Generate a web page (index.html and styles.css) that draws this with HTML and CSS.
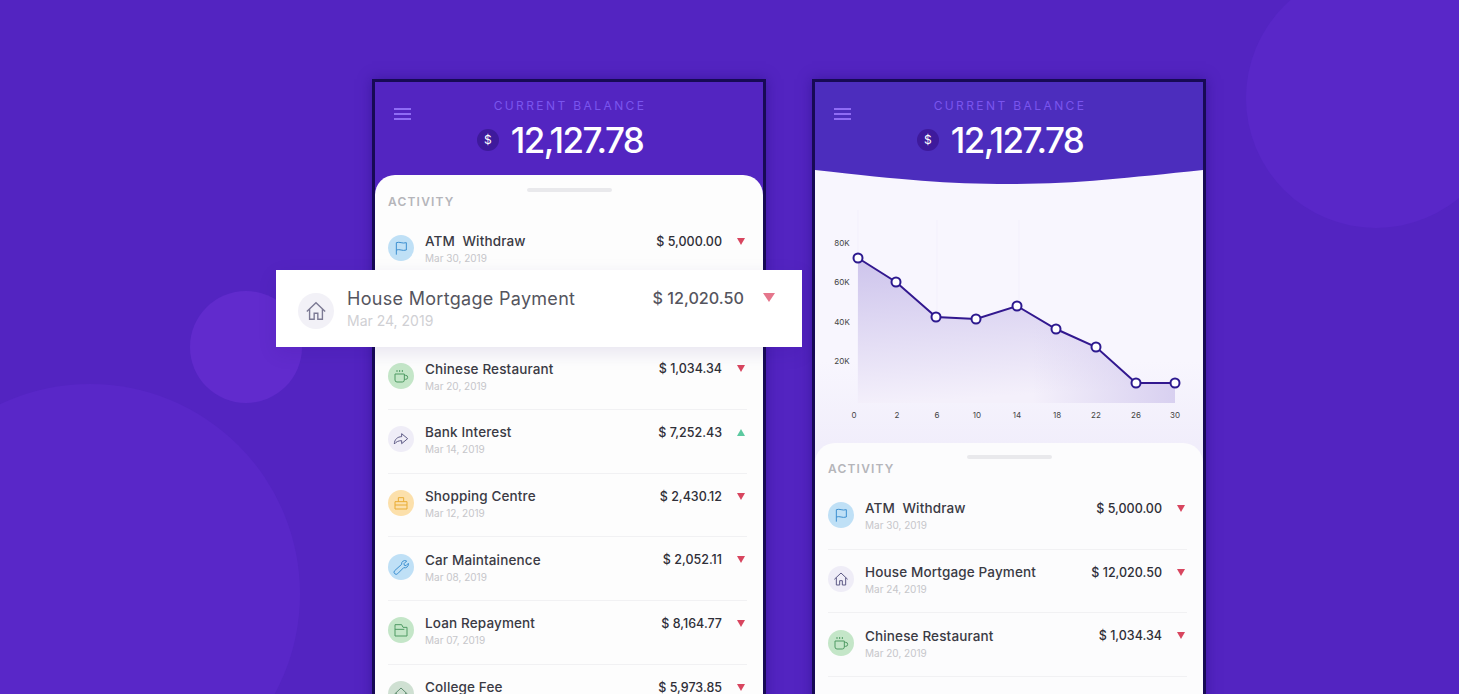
FILE: index.html
```html
<!DOCTYPE html>
<html lang="en">
<head>
<meta charset="UTF-8">
<meta name="viewport" content="width=device-width, initial-scale=1.0">
<link rel="stylesheet" href="styles.css">
<title>Current Balance</title>
</head>
<body>
  <svg class="defs" width="0" height="0">
    <symbol id="i-flag" viewBox="0 0 24 24"><path d="M5 22V4c5-2 9 2 15 0v11c-6 2-10-2-15 0"/></symbol>
    <symbol id="i-home" viewBox="0 0 24 24"><path d="M2 12.500 12 3l10 9.500M5 10v11h5v-6.500h4V21h5V10"/></symbol>
    <symbol id="i-cup" viewBox="0 0 24 24"><path d="M3 9h14v9a3 3 0 0 1-3 3H6a3 3 0 0 1-3-3zM17 11h2a2.500 2.500 0 0 1 0 6h-2M6 3v3M10 3v3M14 3v3"/></symbol>
    <symbol id="i-share" viewBox="0 0 24 24"><path d="M13 4l9 7.500-9 7.500v-4.500c-5 0-8 1.500-11 5 0-7 5-11 11-11z"/></symbol>
    <symbol id="i-bag" viewBox="0 0 24 24"><path d="M3 10h18v11H3zM8 10V4h8v6M3 15h18"/></symbol>
    <symbol id="i-wrench" viewBox="0 0 24 24"><path d="M14.500 3.500a5.500 5.500 0 0 1 6-.5l-4 4 .5 2.500 2.500.5 3.500-3.500a5.500 5.500 0 0 1-7 6.500L7 22a2.500 2.500 0 0 1-4.500-4.500L13 8a5 5 0 0 1 1.500-4.500z"/></symbol>
    <symbol id="i-wallet" viewBox="0 0 24 24"><path d="M3 8V4h10l2 4h6v13H3zM3 11h14"/></symbol>
  </svg>

  <div class="page">
    <div class="blob blob-top"></div>
    <div class="blob blob-small"></div>
    <div class="blob blob-big"></div>

    <div class="phones">
      <section class="phone">
        <header class="head">
          <div class="menu"><span></span><span></span><span></span></div>
          <div class="balance">
            <div class="balance-label">CURRENT BALANCE</div>
            <div class="balance-value"><span class="coin">$</span><span>12,127.78</span></div>
          </div>
        </header>
        <div class="card card-first">
          <div class="handle"></div>
          <h2 class="card-title">ACTIVITY</h2>
          <ul class="rows">
            <li class="row">
              <span class="ico ico-blue"><svg><use href="#i-flag"/></svg></span>
              <div class="info"><div class="name">ATM &nbsp;Withdraw</div><div class="date">Mar 30, 2019</div></div>
              <div class="amount">$ 5,000.00</div><span class="down"></span>
            </li>
            <li class="row"></li>
            <li class="row">
              <span class="ico ico-green"><svg><use href="#i-cup"/></svg></span>
              <div class="info"><div class="name">Chinese Restaurant</div><div class="date">Mar 20, 2019</div></div>
              <div class="amount">$ 1,034.34</div><span class="down"></span>
            </li>
            <li class="row">
              <span class="ico ico-grey"><svg><use href="#i-share"/></svg></span>
              <div class="info"><div class="name">Bank Interest</div><div class="date">Mar 14, 2019</div></div>
              <div class="amount">$ 7,252.43</div><span class="up"></span>
            </li>
            <li class="row">
              <span class="ico ico-yellow"><svg><use href="#i-bag"/></svg></span>
              <div class="info"><div class="name">Shopping Centre</div><div class="date">Mar 12, 2019</div></div>
              <div class="amount">$ 2,430.12</div><span class="down"></span>
            </li>
            <li class="row">
              <span class="ico ico-blue"><svg><use href="#i-wrench"/></svg></span>
              <div class="info"><div class="name">Car Maintainence</div><div class="date">Mar 08, 2019</div></div>
              <div class="amount">$ 2,052.11</div><span class="down"></span>
            </li>
            <li class="row">
              <span class="ico ico-green"><svg><use href="#i-wallet"/></svg></span>
              <div class="info"><div class="name">Loan Repayment</div><div class="date">Mar 07, 2019</div></div>
              <div class="amount">$ 8,164.77</div><span class="down"></span>
            </li>
            <li class="row">
              <span class="ico ico-sage"><svg><use href="#i-home"/></svg></span>
              <div class="info"><div class="name">College Fee</div><div class="date">&nbsp;</div></div>
              <div class="amount">$ 5,973.85</div><span class="down"></span>
            </li>
          </ul>
        </div>
      </section>

      <section class="phone phone-chart">
        <header class="head">
          <div class="menu"><span></span><span></span><span></span></div>
          <div class="balance">
            <div class="balance-label">CURRENT BALANCE</div>
            <div class="balance-value"><span class="coin">$</span><span>12,127.78</span></div>
          </div>
        </header>
        <svg class="chart" viewBox="0 0 388 273" width="388" height="273">
          <defs>
            <linearGradient id="fillBack" x1="0" y1="0" x2="0" y2="1">
              <stop offset="0.7" stop-color="#f8f6fe"/>
              <stop offset="1" stop-color="#f1eefb"/>
            </linearGradient>
            <linearGradient id="fillDown" x1="0" y1="0" x2="0.15" y2="1">
              <stop offset="0" stop-color="#cdc4ec"/>
              <stop offset="1" stop-color="#f4f0fb"/>
            </linearGradient>
            <linearGradient id="fillSide" x1="0" y1="0" x2="1" y2="0">
              <stop offset="0.55" stop-color="#d8d0f0" stop-opacity="0"/>
              <stop offset="1" stop-color="#d8d0f0"/>
            </linearGradient>
          </defs>
          <rect width="388" height="273" fill="url(#fillBack)"/>
          <path d="M0 0C90 10 130 14 195 14S310 8 388 0V-2H0Z" fill="#4c2dbd"/>
          <g class="grid-lines">
            <path d="M43 40V233M122 50V233M204 50V233"/>
          </g>
          <path d="M43 88 81 112 121 147 161 149 202 136 241 159 281 177 321 213 360 213V233H43Z" fill="url(#fillDown)"/>
          <path d="M43 88 81 112 121 147 161 149 202 136 241 159 281 177 321 213 360 213V233H43Z" fill="url(#fillSide)"/>
          <polyline class="line" points="43,88 81,112 121,147 161,149 202,136 241,159 281,177 321,213 360,213"/>
          <g class="dots">
            <circle cx="43" cy="88" r="4.500"/><circle cx="81" cy="112" r="4.500"/><circle cx="121" cy="147" r="4.500"/>
            <circle cx="161" cy="149" r="4.500"/><circle cx="202" cy="136" r="4.500"/><circle cx="241" cy="159" r="4.500"/>
            <circle cx="281" cy="177" r="4.500"/><circle cx="321" cy="213" r="4.500"/><circle cx="360" cy="213" r="4.500"/>
          </g>
          <g class="axis">
            <text x="27" y="76">80K</text><text x="27" y="115">60K</text><text x="27" y="155">40K</text><text x="27" y="194">20K</text>
            <text x="39" y="248">0</text><text x="82" y="248">2</text><text x="122" y="248">6</text>
            <text x="162" y="248">10</text><text x="202" y="248">14</text><text x="242" y="248">18</text>
            <text x="281" y="248">22</text><text x="321" y="248">26</text><text x="360" y="248">30</text>
          </g>
        </svg>
        <div class="card">
          <div class="handle"></div>
          <h2 class="card-title">ACTIVITY</h2>
          <ul class="rows">
            <li class="row">
              <span class="ico ico-blue"><svg><use href="#i-flag"/></svg></span>
              <div class="info"><div class="name">ATM &nbsp;Withdraw</div><div class="date">Mar 30, 2019</div></div>
              <div class="amount">$ 5,000.00</div><span class="down"></span>
            </li>
            <li class="row">
              <span class="ico ico-grey"><svg><use href="#i-home"/></svg></span>
              <div class="info"><div class="name">House Mortgage Payment</div><div class="date">Mar 24, 2019</div></div>
              <div class="amount">$ 12,020.50</div><span class="down"></span>
            </li>
            <li class="row">
              <span class="ico ico-green"><svg><use href="#i-cup"/></svg></span>
              <div class="info"><div class="name">Chinese Restaurant</div><div class="date">Mar 20, 2019</div></div>
              <div class="amount">$ 1,034.34</div><span class="down"></span>
            </li>
          </ul>
        </div>
      </section>
    </div>

    <div class="popout">
      <span class="ico ico-grey"><svg><use href="#i-home"/></svg></span>
      <div><div class="name">House Mortgage Payment</div><div class="date">Mar 24, 2019</div></div>
      <div class="amount">$ 12,020.50</div><span class="down"></span>
    </div>
  </div>
</body>
</html>
```

FILE: styles.css
```css
* {
  box-sizing: border-box;
}

body {
  margin: 0;
  font-family: Inter, "Noto Sans", sans-serif;
  background-color: #5324c1;
}

.defs {
  position: absolute;
}

.page {
  position: relative;
  height: 694px;
  overflow: hidden;
  background-color: #5324c1;
}

.blob {
  position: absolute;
  border-radius: 50%;
  background-color: #5927c8;
}

.blob-top {
  left: 1246px;
  top: -32px;
  width: 260px;
  height: 260px;
}

.blob-small {
  left: 190px;
  top: 291px;
  width: 112px;
  height: 112px;
  background-color: #612bcd;
}

.blob-big {
  left: -120px;
  top: 384px;
  width: 420px;
  height: 420px;
}

.phones {
  position: relative;
  display: flex;
  gap: 46px;
  padding: 79px 0 0 372px;
}

.phone {
  width: 394px;
  height: 700px;
  border: 3px solid #170a55;
  border-bottom: 0;
  background-color: #5325c1;
  box-shadow: 0 0 12px rgba(40, 14, 130, 0.55);
  overflow: hidden;
}

.phone-chart {
  background-color: #f1eefb;
}

.head {
  display: grid;
  grid-template-columns: 1fr auto 1fr;
  height: 93px;
  padding: 17px 19px 0;
}

.phone-chart .head {
  height: 88px;
  background-color: #4c2dbd;
}

.menu {
  display: flex;
  flex-direction: column;
  gap: 3px;
  width: 17px;
  margin-top: 9px;
}

.menu span {
  height: 2px;
  background-color: #8f6cf5;
}

.balance {
  grid-column: 2;
  text-align: center;
}

.balance-label {
  padding-left: 2px;
  font-size: 12px;
  line-height: 14px;
  letter-spacing: 2.400px;
  color: #7a55ee;
}

.balance-value {
  display: flex;
  align-items: center;
  justify-content: center;
  gap: 12px;
  margin-top: 5px;
  padding-right: 18px;
  font-size: 35px;
  line-height: 44px;
  font-weight: 500;
  letter-spacing: -1.600px;
  color: #fff;
}

.coin {
  width: 22px;
  height: 22px;
  border-radius: 50%;
  font-size: 12px;
  line-height: 22px;
  letter-spacing: 0;
  font-weight: 400;
  text-align: center;
  background-color: #3e1a9c;
}

.chart {
  display: block;
}

.grid-lines path {
  fill: none;
  stroke: #f3f0fc;
  stroke-width: 1;
}

.line {
  fill: none;
  stroke: #32188f;
  stroke-width: 2;
}

.dots circle {
  fill: #fff;
  stroke: #2d1a8f;
  stroke-width: 2;
}

.axis text {
  font-size: 8px;
  text-anchor: middle;
  fill: #444;
}

.card {
  height: 260px;
  padding: 12px 0 0;
  border-radius: 20px 20px 0 0;
  background-color: #fcfcfd;
}

.card-first {
  height: 530px;
  padding-top: 13px;
  background-color: #fdfdfd;
}

.handle {
  width: 85px;
  height: 4px;
  margin: 0 auto;
  border-radius: 2px;
  background-color: #e9e9ec;
}

.card-title {
  margin: 3px 0 0 13px;
  font-size: 12px;
  line-height: 14px;
  font-weight: 600;
  letter-spacing: 1.200px;
  color: #b5b5ba;
}

.rows {
  list-style: none;
  margin: 10px 16px 0 13px;
  padding: 0;
}

.row {
  display: grid;
  grid-template-columns: 26px 1fr auto 12px;
  align-items: center;
  column-gap: 11px;
  height: 63.700px;
  padding: 0 0 4px;
  border-bottom: 1px solid #f1f1f3;
}

.info {
  margin-top: 2px;
}

.row .amount {
  align-self: start;
  margin: 15px 2px 0 0;
}

.row .down,
.row .up {
  align-self: start;
  margin-top: 19px;
}

.ico {
  display: flex;
  align-items: center;
  justify-content: center;
  width: 26px;
  height: 26px;
  border-radius: 50%;
}

.ico svg {
  width: 16px;
  height: 16px;
  fill: none;
  stroke: currentColor;
  stroke-width: 1.500;
}

.ico-blue {
  background-color: #bfe0f6;
  color: #3c8fd0;
}

.ico-green {
  background-color: #c4e6c8;
  color: #4f9a63;
}

.ico-grey {
  background-color: #efedf7;
  color: #5d5a85;
}

.ico-yellow {
  background-color: #fce0ab;
  color: #e9ac33;
}

.ico-sage {
  background-color: #cfe0d2;
  color: #5f8d70;
}

.name {
  font-size: 13.500px;
  line-height: 17px;
  font-weight: 500;
  letter-spacing: 0.140px;
  color: #3a3a44;
}

.date {
  margin-top: 1px;
  font-size: 10px;
  line-height: 14px;
  color: #c6c6ca;
}

.amount {
  font-size: 12.500px;
  line-height: 15px;
  font-weight: 500;
  color: #2f2f38;
}

.down,
.up {
  width: 0;
  height: 0;
  justify-self: center;
  border-left: 4.500px solid transparent;
  border-right: 4.500px solid transparent;
}

.down {
  border-top: 7px solid #d8455f;
}

.up {
  border-bottom: 7px solid #5cc9a0;
}

/* the row pulled out over the first phone */
.popout {
  position: absolute;
  left: 276px;
  top: 270px;
  display: grid;
  grid-template-columns: 36px 1fr auto 14px;
  align-items: center;
  column-gap: 13px;
  width: 526px;
  height: 77px;
  padding: 0 26px 0 22px;
  background-color: #fff;
  box-shadow: 0 6px 18px rgba(40, 10, 120, 0.1);
}

.popout .ico {
  width: 36px;
  height: 36px;
  margin-top: 4px;
  background-color: #f2f1f7;
  color: #7c7a94;
}

.popout .ico svg {
  width: 22px;
  height: 22px;
}

.popout .name {
  font-size: 18px;
  line-height: 24px;
  font-weight: 400;
  letter-spacing: 0.300px;
  color: #55555e;
}

.popout .date {
  margin-top: 1px;
  font-size: 14px;
  line-height: 18px;
  color: #d0d0d4;
}

.popout .amount {
  align-self: start;
  margin: 16px 5px 0 0;
  font-size: 16.200px;
  line-height: 24px;
  color: #55555e;
}

.popout .down {
  align-self: start;
  margin-top: 23px;
  border-left-width: 6px;
  border-right-width: 6px;
  border-top: 9px solid #e5768c;
}
```
